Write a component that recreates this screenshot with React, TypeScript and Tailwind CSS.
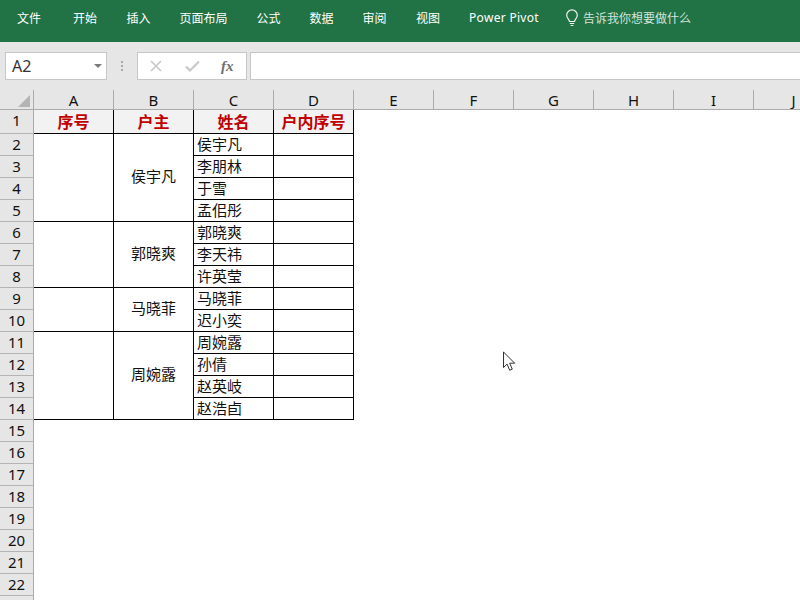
const tabs = [
  { label: '文件', w: 'w-[58px]' },
  { label: '开始', w: 'w-[54px]' },
  { label: '插入', w: 'w-[53px]' },
  { label: '页面布局', w: 'w-[77px]' },
  { label: '公式', w: 'w-[53px]' },
  { label: '数据', w: 'w-[53px]' },
  { label: '审阅', w: 'w-[53px]' },
  { label: '视图', w: 'w-[54px]' },
];

const columns = ['A', 'B', 'C', 'D', 'E', 'F', 'G', 'H', 'I', 'J'];
const rows = Array.from({ length: 22 }, (_, i) => i + 1);

const households = [
  { owner: '侯宇凡', span: 'row-span-4', members: ['侯宇凡', '李朋林', '于雪', '孟佀彤'] },
  { owner: '郭晓爽', span: 'row-span-3', members: ['郭晓爽', '李天祎', '许英莹'] },
  { owner: '马晓菲', span: 'row-span-2', members: ['马晓菲', '迟小奕'] },
  { owner: '周婉露', span: 'row-span-4', members: ['周婉露', '孙倩', '赵英岐', '赵浩卣'] },
];

const cjk = "font-['Noto_Sans_CJK_SC','Noto_Sans',sans-serif]";

function RibbonTabs() {
  return (
    <div className={`h-[42px] bg-[#217346] flex items-center pb-[6px] text-white text-[12px] ${cjk}`}>
      {tabs.map((t) => (
        <div key={t.label} className={`${t.w} text-center shrink-0`}>
          {t.label}
        </div>
      ))}
      <div className="ml-[9px] w-[80px] shrink-0 text-center font-['Noto_Sans',sans-serif] tracking-[0.3px]">Power Pivot</div>
      <div className="ml-[21px] flex items-center gap-[4px] text-[#d3e3da]">
        <svg width="14" height="18" viewBox="0 0 14 18" fill="none" stroke="#eef4f0" strokeWidth="1.2">
          <path d="M4.5 12.5c0-2-2.8-3.2-2.8-6.3a5.3 5.3 0 0 1 10.6 0c0 3.1-2.8 4.3-2.8 6.3z" />
          <path d="M4.8 14.5h4.4M5.6 16.5h2.8" />
        </svg>
        <span>告诉我你想要做什么</span>
      </div>
    </div>
  );
}

function FormulaBar() {
  return (
    <div className="h-[48px] bg-[#e6e6e6] flex items-start pt-[10px]">
      <div className="ml-[5px] w-[102px] h-[28px] bg-white border border-[#c6c6c6] flex items-center justify-between pl-[6px] pr-[4px]">
        <span className="font-['Noto_Sans',sans-serif] text-[16px] text-[#333]">A2</span>
        <span className="w-0 h-0 border-x-[4px] border-x-transparent border-t-[4px] border-t-[#7a7a7a]" />
      </div>
      <div className="w-[30px] h-[28px] flex flex-col items-center justify-center gap-[2px]">
        <span className="w-[2px] h-[2px] bg-[#a8a8a8]" />
        <span className="w-[2px] h-[2px] bg-[#a8a8a8]" />
        <span className="w-[2px] h-[2px] bg-[#a8a8a8]" />
      </div>
      <div className="w-[110px] h-[28px] bg-white border border-[#c6c6c6] flex items-center">
        <svg className="ml-[12px]" width="12" height="12" viewBox="0 0 12 12" fill="none" stroke="#c8c8c8" strokeWidth="1.7">
          <path d="M1 1l10 10M11 1L1 11" />
        </svg>
        <svg className="ml-[23px]" width="15" height="12" viewBox="0 0 15 12" fill="none" stroke="#c8c8c8" strokeWidth="2.2">
          <path d="M1 6.5l4 4L14 1.5" />
        </svg>
        <span className="ml-[21px] font-['Liberation_Serif',serif] italic font-bold text-[15px] text-[#707070]">fx</span>
      </div>
      <div className="ml-[3px] flex-1 h-[28px] bg-white border-y border-l border-[#c6c6c6]" />
    </div>
  );
}

function ColumnHeaders() {
  return (
    <div className="h-[20px] flex bg-[#e6e6e6] border-b border-[#ababab] overflow-hidden">
      <div className="w-[34px] shrink-0 border-r border-[#ababab] flex items-end justify-end pr-[3px] pb-[2px]">
        <span className="w-0 h-0 border-l-[12px] border-l-transparent border-b-[12px] border-b-[#b4b4b4]" />
      </div>
      {columns.map((c) => (
        <div
          key={c}
          className="w-[80px] shrink-0 border-r border-[#ababab] text-center font-['Noto_Sans',sans-serif] text-[15px] leading-[20px] text-[#111]"
        >
          {c}
        </div>
      ))}
    </div>
  );
}

function RowHeaders() {
  return (
    <div className="w-[34px] shrink-0 bg-[#e6e6e6] border-r border-[#ababab] flex flex-col">
      {rows.map((r) => (
        <div
          key={r}
          className={`${r === 1 ? 'h-[24px]' : 'h-[22px]'} shrink-0 border-b border-[#b4b4b4] text-center font-['Noto_Sans',sans-serif] text-[15px] leading-[21px] text-[#111]`}
        >
          {r}
        </div>
      ))}
    </div>
  );
}

function Sheet() {
  const heads = ['序号', '户主', '姓名', '户内序号'];
  return (
    <div
      className={`grid grid-cols-[repeat(4,80px)] grid-rows-[24px_repeat(13,22px)] w-[320px] self-start text-[15px] text-[#111] ${cjk}`}
    >
      {heads.map((h) => (
        <div
          key={h}
          className="bg-[#f2f2f2] border-r border-b border-black text-center font-bold text-[#c00000] text-[16px] leading-[22px]"
        >
          {h}
        </div>
      ))}
      {households.map((h) => (
        <div key={h.owner} className="contents">
          <div className={`${h.span} border-r border-b border-black`} />
          <div className={`${h.span} border-r border-b border-black flex items-center justify-center pb-[3px]`}>{h.owner}</div>
          {h.members.map((m) => (
            <div key={m} className="contents">
              <div className="border-r border-b border-black pl-[3px] leading-[20px]">{m}</div>
              <div className="border-r border-b border-black" />
            </div>
          ))}
        </div>
      ))}
    </div>
  );
}

function Cursor() {
  return (
    <svg className="absolute left-[503px] top-[351px]" width="14" height="22" viewBox="0 0 14 22">
      <path
        d="M0.5 1v15.5l3.6-3.4 2.6 6.2 2.6-1.1-2.6-6h5z"
        fill="#fff"
        stroke="#333"
        strokeWidth="1"
      />
    </svg>
  );
}

export default function App() {
  return (
    <div className="relative w-[800px] h-[600px] overflow-hidden bg-white">
      <RibbonTabs />
      <FormulaBar />
      <ColumnHeaders />
      <div className="flex h-[490px] overflow-hidden">
        <RowHeaders />
        <Sheet />
      </div>
      <Cursor />
    </div>
  );
}
